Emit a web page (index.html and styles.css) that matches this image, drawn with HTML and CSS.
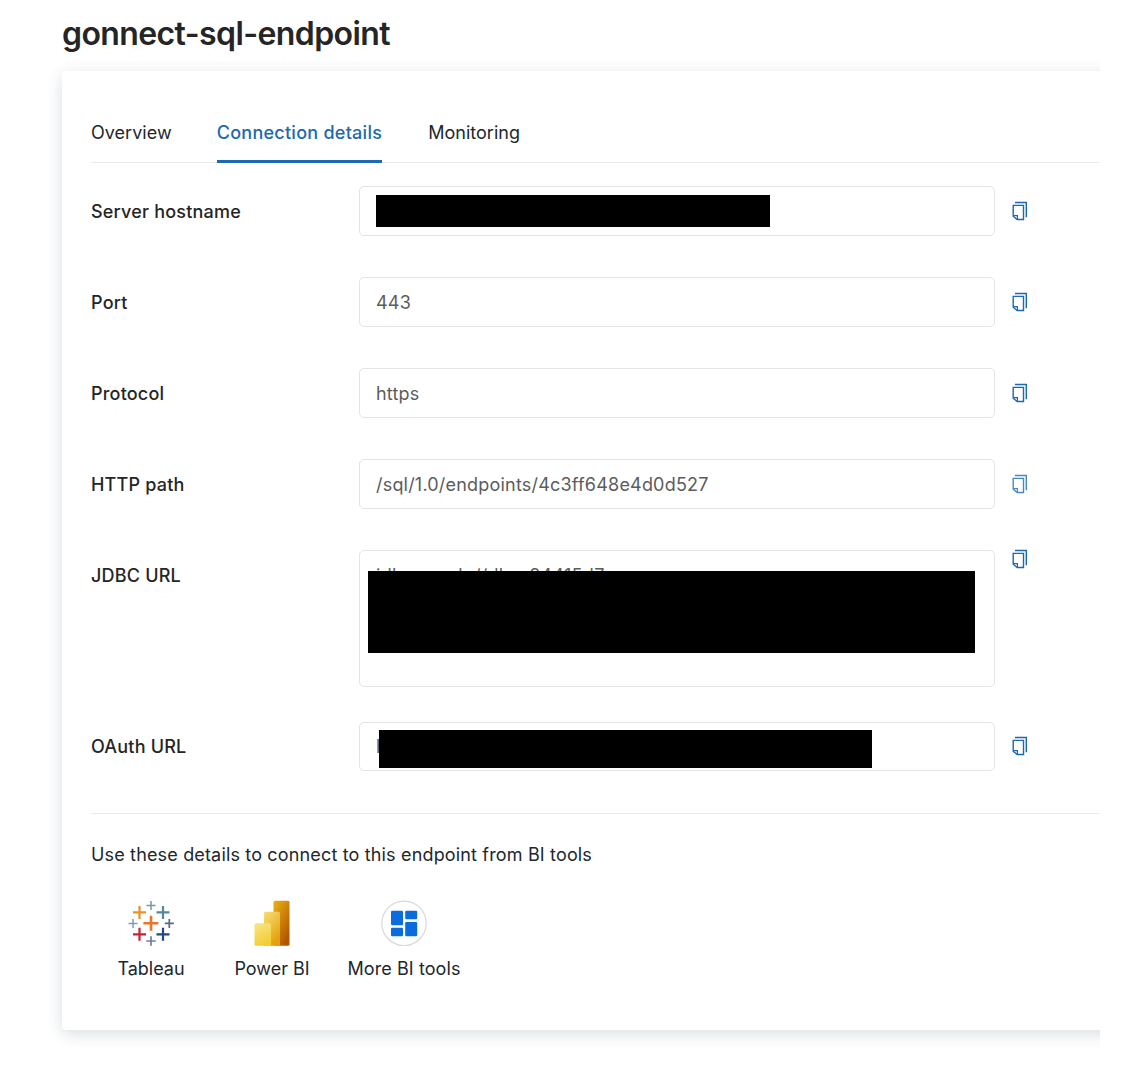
FILE: index.html
```html
<!DOCTYPE html>
<html lang="en">
<head>
<meta charset="utf-8">
<title>gonnect-sql-endpoint</title>
<link rel="stylesheet" href="styles.css">
</head>
<body>
<svg class="defs" width="0" height="0">
  <symbol id="copy" viewBox="0 0 16 20">
    <path d="M3 1.500H14.300V16.200" fill="none" stroke="currentColor" stroke-width="1.400"/>
    <path d="M1.200 4.400H11.500V18.500H5.200L1.200 15.200Z" fill="none" stroke="currentColor" stroke-width="1.400"/>
    <path d="M1.200 14.700H5.400V18.500" fill="none" stroke="currentColor" stroke-width="1.200"/>
  </symbol>
</svg>
<main class="page">
  <h1 class="title">gonnect-sql-endpoint</h1>
  <section class="card">
    <nav class="tabs">
      <a class="tab">Overview</a>
      <a class="tab tab-active">Connection details</a>
      <a class="tab">Monitoring</a>
    </nav>
    <div class="fields">
      <div class="row"><label class="label">Server hostname</label><div class="input"><span class="redact redact-host"></span></div><svg class="copy"><use href="#copy"/></svg></div>
      <div class="row"><label class="label">Port</label><div class="input">443</div><svg class="copy"><use href="#copy"/></svg></div>
      <div class="row"><label class="label">Protocol</label><div class="input">https</div><svg class="copy"><use href="#copy"/></svg></div>
      <div class="row"><label class="label">HTTP path</label><div class="input">/sql/1.0/endpoints/4c3ff648e4d0d527</div><svg class="copy copy-light"><use href="#copy"/></svg></div>
      <div class="row row-tall"><label class="label">JDBC URL</label><div class="input input-tall">jdbc:spark://dbc-84415d7<span class="redact redact-jdbc"></span></div><svg class="copy"><use href="#copy"/></svg></div>
      <div class="row row-last"><label class="label">OAuth URL</label><div class="input">h<span class="redact redact-oauth"></span></div><svg class="copy"><use href="#copy"/></svg></div>
    </div>
    <p class="hint">Use these details to connect to this endpoint from BI tools</p>
    <div class="tools">
      <div class="tool tool-tableau">
        <svg width="46" height="46" viewBox="0 0 46 46" fill="none">
          <path d="M23 15.8v15M15.4 23.3h15" stroke="#e8762d" stroke-width="2.6"/>
          <path d="M11.5 6v13M5 12.4h13" stroke="#eb9129" stroke-width="2.2"/>
          <path d="M35 6v13M28.5 12.4h13" stroke="#56879b" stroke-width="2.2"/>
          <path d="M11.5 27.8v13M5 34.3h13" stroke="#c72037" stroke-width="2.2"/>
          <path d="M35 27.8v13M28.5 34.3h13" stroke="#1f4780" stroke-width="2.2"/>
          <path d="M23 1v9M18.5 5.5h9" stroke="#739ca4" stroke-width="1.5"/>
          <path d="M5 19v9M.5 23.4h9" stroke="#7d9fab" stroke-width="1.5"/>
          <path d="M41.3 19v9M36.8 23.4h9" stroke="#5b6591" stroke-width="1.7"/>
          <path d="M23 36.3v9.4M18.3 41h9.4" stroke="#727ba5" stroke-width="1.7"/>
        </svg>
        <span>Tableau</span>
      </div>
      <div class="tool tool-power">
        <svg width="46" height="46" viewBox="0 0 46 46">
          <defs>
            <linearGradient id="pb1" x1="0" y1="0" x2=".7" y2="1"><stop stop-color="#e9b414"/><stop offset="1" stop-color="#b35400"/></linearGradient>
            <linearGradient id="pb2" x1="0" y1="0" x2=".5" y2="1"><stop stop-color="#f8df77"/><stop offset="1" stop-color="#e3a10c"/></linearGradient>
            <linearGradient id="pb3" x1="0" y1="0" x2=".4" y2="1"><stop stop-color="#f9e589"/><stop offset="1" stop-color="#f2ce36"/></linearGradient>
          </defs>
          <rect x="24.5" y=".7" width="16" height="45" rx="1.5" fill="url(#pb1)"/>
          <path d="M15 13.3q0-1.5 1.5-1.5H29.500q1.5 0 1.500 1.500V45.700H15Z" fill="url(#pb2)"/>
          <path d="M5.500 24.700q0-1.500 1.500-1.500H20.500q1.500 0 1.500 1.500V45.700H7q-1.500 0-1.500-1.500Z" fill="url(#pb3)"/>
        </svg>
        <span>Power BI</span>
      </div>
      <div class="tool tool-more">
        <svg width="46" height="46" viewBox="0 0 46 46">
          <circle cx="23" cy="23.300" r="22.200" fill="#fff" stroke="#d8d8d8" stroke-width="1.200"/>
          <g fill="#0b6cdd"><rect x="10" y="10.700" width="12" height="14.500" rx="1.200"/><rect x="24.200" y="10.700" width="12" height="8.500" rx="1.200"/><rect x="10" y="27.700" width="12" height="8.500" rx="1.200"/><rect x="24.200" y="22" width="12" height="14.200" rx="1.200"/></g>
        </svg>
        <span>More BI tools</span>
      </div>
    </div>
  </section>
</main>
</body>
</html>
```
FILE: styles.css
```css
* { box-sizing: border-box; }
body { margin: 0; background: #fff; font-family: Inter, "Liberation Sans", sans-serif; font-size: 18px; color: #20272e; }
.defs { display: block; height: 0; }
.page { width: 1100px; height: 1080px; padding: 14px 0 0 62px; overflow: hidden; }
.title { margin: 0 0 17px; height: 40px; line-height: 40px; font-size: 32px; font-weight: 600; letter-spacing: -0.6px; color: #252525; white-space: nowrap; }
.card { width: 1100px; height: 959px; padding: 31px 29px 0; border-radius: 4px; background: #fff; box-shadow: 0 4px 16px rgba(27, 68, 85, .17); }
.tabs { display: flex; gap: 46px; height: 61px; border-bottom: 1px solid #ebebeb; }
.tab { height: 61px; line-height: 62px; letter-spacing: .03px; white-space: nowrap; }
.tab-active { margin-left: -1px; letter-spacing: .26px; color: #2069b0; font-weight: 500; border-bottom: 3px solid #1d69b4; }
.fields { padding: 23px 0 42px; border-bottom: 1px solid #ebebeb; display: flex; flex-direction: column; gap: 41px; }
.row { display: grid; grid-template-columns: 268px 636px 33px; align-items: start; height: 50px; }
.row-tall { height: 137px; margin-bottom: -6px; }
.row-last { height: 49px; }
.label { line-height: 52px; font-weight: 500; letter-spacing: .2px; white-space: nowrap; color: #252525; }
.input { position: relative; height: 50px; line-height: 50px; padding-left: 16px; border: 1px solid #e4e4e4; border-radius: 5px; color: #5c5c5c; letter-spacing: .2px; white-space: nowrap; }
.input-tall { height: 137px; letter-spacing: .28px; }
.row-last .label { line-height: 50px; }
.row-last .input { height: 49px; line-height: 48px; }
.copy { width: 16px; height: 20px; margin: 15px 0 0 17px; color: #1c68b3; }
.copy-light { color: #478ac3; }
.row-tall .copy { margin-top: -1px; }
.row-last .copy { margin-top: 14px; }
.redact { position: absolute; background: #000; }
.redact-host { left: 16px; top: 8px; width: 394px; height: 32px; }
.redact-jdbc { left: 8px; top: 20px; width: 607px; height: 82px; }
.redact-oauth { left: 19px; top: 7px; width: 493px; height: 38px; }
.hint { margin: 26px 0 0; height: 30px; line-height: 30px; letter-spacing: .16px; white-space: nowrap; }
.tools { display: flex; margin-top: 30px; }
.tool { display: flex; flex-direction: column; align-items: center; gap: 8px; line-height: 30px; white-space: nowrap; }
.tool-tableau { width: 120px; }
.tool-power { width: 122px; }
.tool-more { width: 142px; letter-spacing: .08px; }
```
